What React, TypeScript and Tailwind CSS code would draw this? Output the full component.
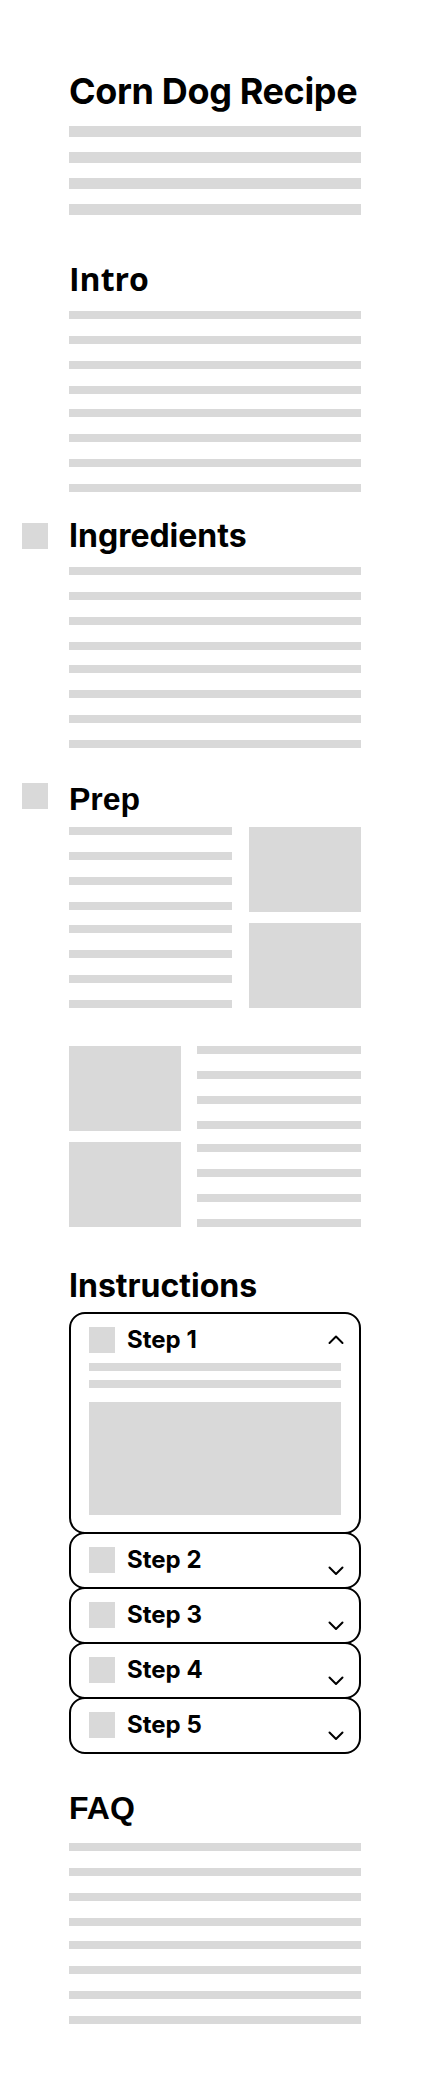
const inter = "font-['Inter','Liberation_Sans',sans-serif]"
const arial = "font-['Liberation_Sans','Arial',sans-serif]"
const openSans = "font-['Open_Sans','Noto_Sans',sans-serif]"

function Bar({ tall = false }: { tall?: boolean }) {
  return <div className={`w-full bg-[#d9d9d9] ${tall ? 'h-[11px]' : 'h-[8px]'}`} />
}

function BarGroup() {
  return (
    <div className="flex flex-col gap-[17px]">
      <Bar />
      <Bar />
      <Bar />
      <Bar />
    </div>
  )
}

function Lines() {
  return (
    <div className="flex flex-col gap-[15px]">
      <BarGroup />
      <BarGroup />
    </div>
  )
}

function Square() {
  return <div className="h-[26px] w-[26px] shrink-0 bg-[#d9d9d9]" />
}

function Chevron({ open }: { open: boolean }) {
  return (
    <svg
      width="16"
      height="26"
      viewBox="0 0 16 26"
      fill="none"
      stroke="black"
      strokeWidth="2"
      strokeLinecap="round"
      strokeLinejoin="round"
      className="-mr-[3px] shrink-0 overflow-visible"
    >
      {open ? (
        <polyline points="1.5,16 8,9.5 14.5,16" />
      ) : (
        <polyline points="1.5,20.5 8,27 14.5,20.5" />
      )}
    </svg>
  )
}

function Step({ n, open = false }: { n: number; open?: boolean }) {
  return (
    <div
      className={`rounded-[16px] border-2 border-black bg-white px-[18px] pt-[13px] ${
        open ? 'pb-[17px]' : '-mt-[2px] pb-[14px]'
      }`}
    >
      <div className="flex h-[26px] items-start">
        <Square />
        <span className={`ml-[12px] flex-1 text-[24px] font-bold leading-[26px] text-black ${inter}`}>
          Step {n}
        </span>
        <Chevron open={open} />
      </div>
      {open && (
        <>
          <div className="mt-[10px] flex flex-col gap-[9px]">
            <Bar />
            <Bar />
          </div>
          <div className="mt-[14px] h-[113px] w-full bg-[#d9d9d9]" />
        </>
      )}
    </div>
  )
}

function MediaCol() {
  return (
    <div className="flex w-[112px] shrink-0 flex-col gap-[11px]">
      <div className="h-[85px] bg-[#d9d9d9]" />
      <div className="h-[85px] bg-[#d9d9d9]" />
    </div>
  )
}

export default function App() {
  return (
    <div className="min-h-[2093px] bg-white">
      <main className="mx-auto flex w-[292px] flex-col pt-[73px] pb-[70px] text-black">
        <h1 className={`whitespace-nowrap text-[36px] font-bold leading-[36px] tracking-[-0.01em] ${inter}`}>
          Corn Dog Recipe
        </h1>
        <div className="mt-[17px] flex flex-col gap-[15px]">
          <Bar tall />
          <Bar tall />
          <Bar tall />
          <Bar tall />
        </div>

        <h2 className={`mt-[48px] text-[32px] font-bold leading-[32px] ${openSans}`}>Intro</h2>
        <div className="mt-[16px]">
          <Lines />
        </div>

        <div className="-ml-[47px] mt-[28px] flex items-center gap-[21px]">
          <Square />
          <h2 className={`text-[32px] font-bold leading-[32px] ${inter}`}>Ingredients</h2>
        </div>
        <div className="mt-[15px]">
          <Lines />
        </div>

        <div className="-ml-[47px] mt-[35px] flex items-start gap-[21px]">
          <Square />
          <h2 className={`text-[32px] font-bold leading-[32px] ${arial}`}>Prep</h2>
        </div>
        <div className="mt-[12px] flex gap-[17px]">
          <div className="flex-1">
            <Lines />
          </div>
          <MediaCol />
        </div>
        <div className="mt-[38px] flex gap-[16px]">
          <MediaCol />
          <div className="flex-1">
            <Lines />
          </div>
        </div>

        <h2 className={`mt-[43px] text-[32px] font-bold leading-[32px] ${inter}`}>Instructions</h2>
        <div className="mt-[10px] flex flex-col">
          <Step n={1} open />
          <Step n={2} />
          <Step n={3} />
          <Step n={4} />
          <Step n={5} />
        </div>

        <h2 className={`mt-[38px] text-[32px] font-bold leading-[32px] ${arial}`}>FAQ</h2>
        <div className="mt-[19px]">
          <Lines />
        </div>
      </main>
    </div>
  )
}
